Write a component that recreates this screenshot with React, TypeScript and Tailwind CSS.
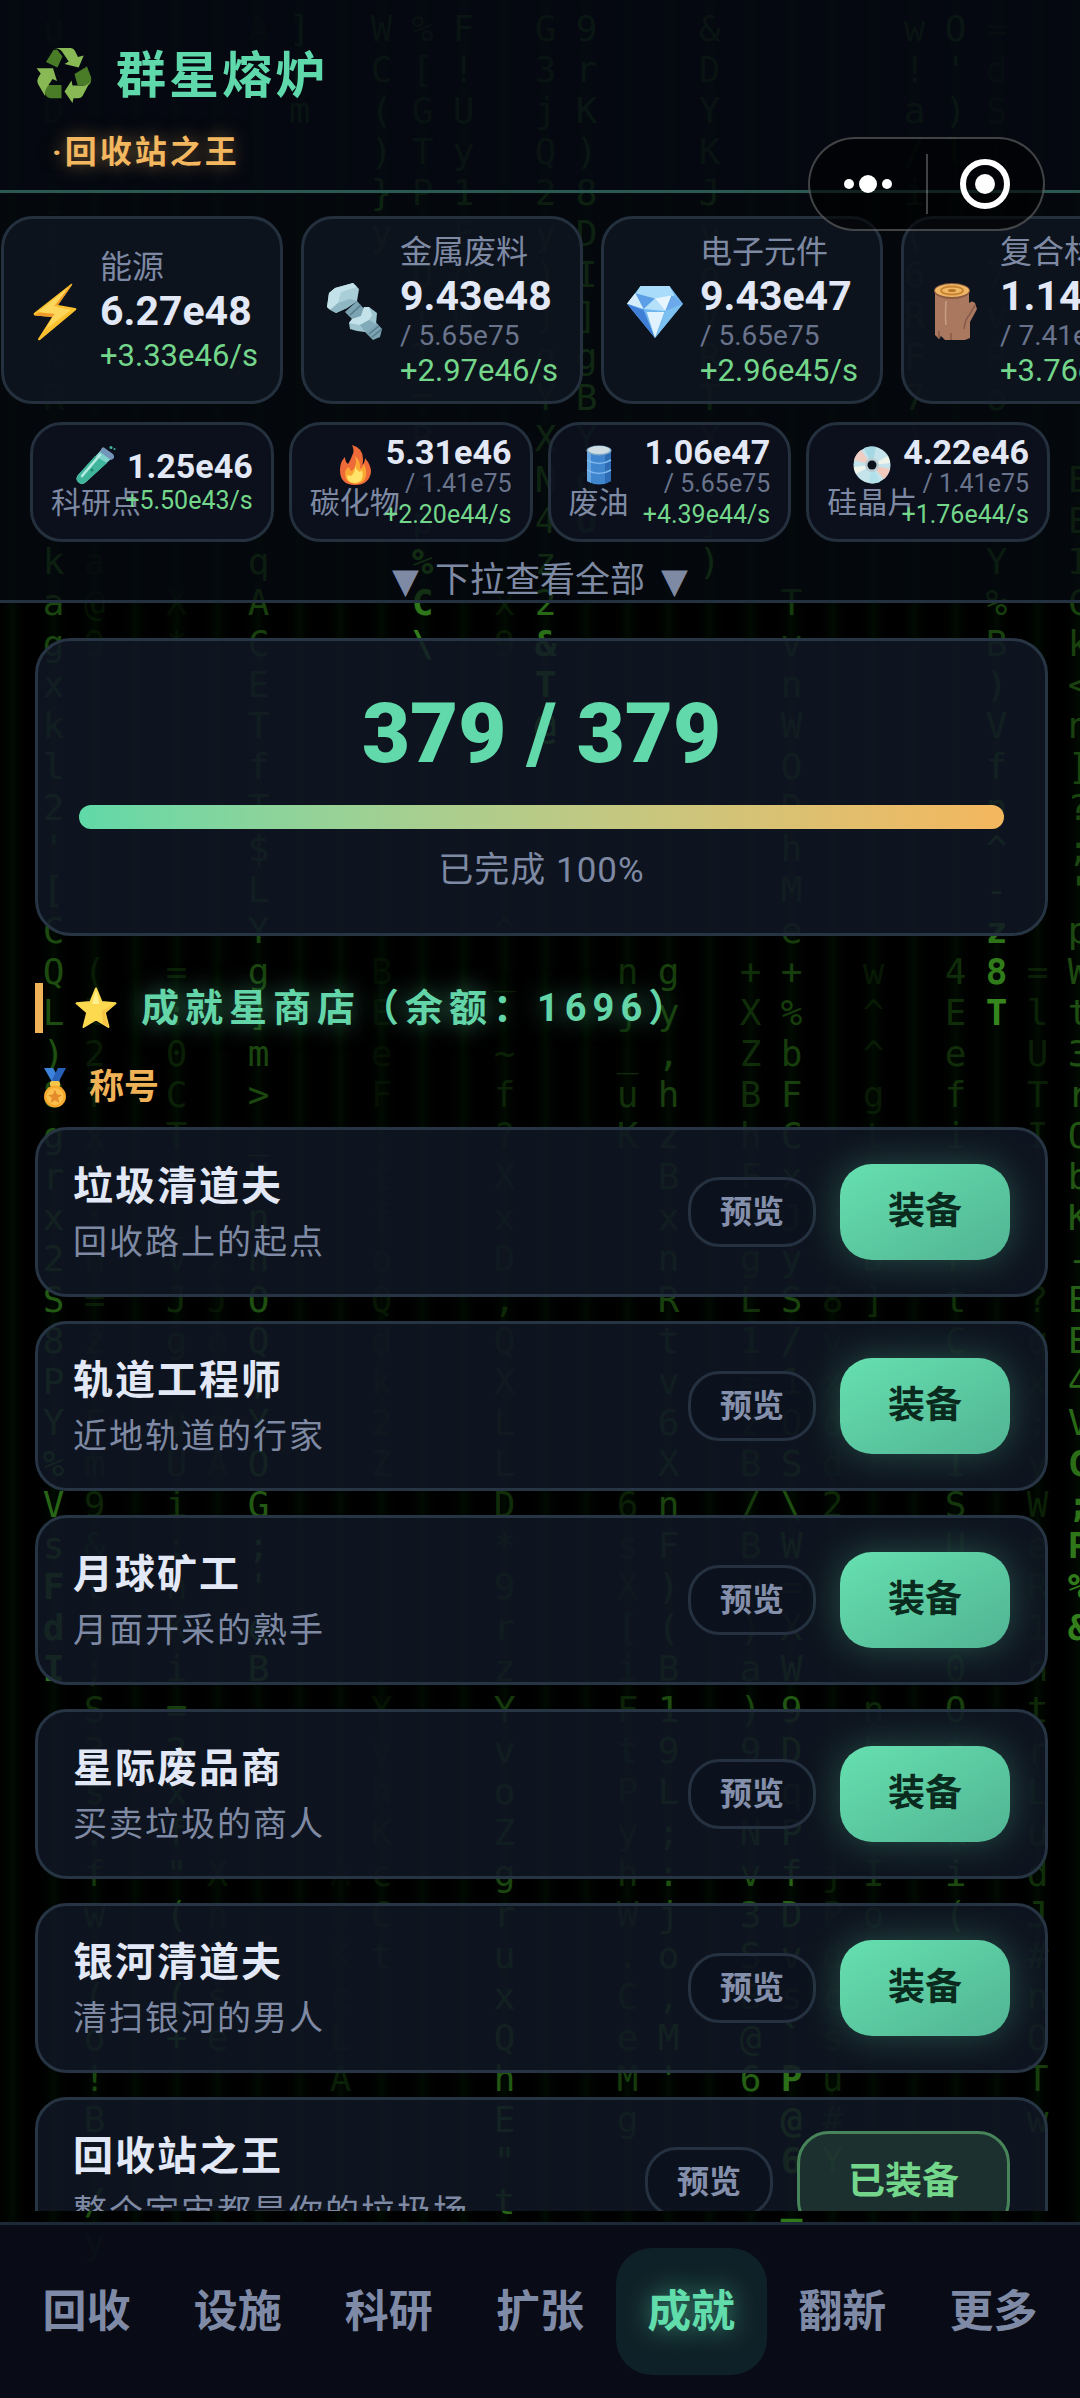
import { useState } from 'react';

type IconProps = { className?: string };

function RecycleIcon({ className }: IconProps) {
  return (
    <svg viewBox="0 0 56 56" className={className} aria-hidden="true">
      <path d="M10 14 17.500 2 21 1.500 26.500 8.500 21.500 19.500Z" fill="#4a7c28" />
      <path d="M38.500 26 51 18.500 55 29Q56 34 53 37H41.500Z" fill="#4a7c28" />
      <path d="M10 37H25.500V50.300H15Q10 50 8.700 45Z" fill="#4a7c28" />
      <path d="M18.500 0H35Q38 .5 39 3L42 9 47.700 7.500 42.700 19.500 28.500 16 32.700 13.500 26 3.500Q23 0 18.500 0Z" fill="#88b954" />
      <path d="M54.500 33 46.500 48Q45 50.300 42 50.300H37.500L36.500 55 28.500 43.500 35.500 32.500 36.500 37.500H47Q52 37.500 54.500 33Z" fill="#88b954" />
      <path d="M.5 20.300H17L21 33 16.500 31 10.500 40Q8 44 9 48L2 36Q.5 33 2 30L4.700 25.500Z" fill="#88b954" />
    </svg>
  );
}

function EnergyIcon({ className }: IconProps) {
  return (
    <svg viewBox="0 0 56 58" className={className} aria-hidden="true">
      <path d="M44 1 7 30Q6 32 8 32.500L25 34 11 56Q11 58 13 57L49 27Q50 25 48 25L31 22 45 2Q46 0 44 1Z" fill="#fbc02d" />
      <path d="M42 4 11 29 27 31 19 46 44 27 29 24Z" fill="#fdd75c" />
      <path d="M8 32.500 25 34 28 31 12 29.500ZM31 22 45 2 42 4 27 23.500Z" fill="#f19a2c" />
    </svg>
  );
}

function BoltIcon({ className }: IconProps) {
  return (
    <svg viewBox="0 0 56 58" className={className} aria-hidden="true">
      <path d="M18 29 30 18 55 46 53 54 46 57Z" fill="#7ba3b2" />
      <path d="M23 32 34 22M42 51 52 43M45 54 55 46" stroke="#557b8a" strokeWidth="1.500" />
      <path d="M0 24 2 10 8 5 26 0 32 6 30 18 20 25 9 30Z" fill="#a9ced8" />
      <path d="M2 10 8 5 26 0 30 4 14 9 11 20 3 27 0 24Z" fill="#c3e1e8" />
      <path d="M11 20 23 16 30 18 20 25 9 30 3 27Z" fill="#8fb7c3" />
      <path d="M22 40 25 36 34 33 37 24 42 24 50 30 49 41 38 49 30 48 23 46Z" fill="#9dc4cf" />
      <path d="M22 40 25 36 34 33 37 24 42 24 45 32 42 37 33 42Z" fill="#c4e2e9" />
      <path d="M33 42 42 37 49 41 38 49Z" fill="#82abb9" />
    </svg>
  );
}

function GemIcon({ className }: IconProps) {
  return (
    <svg viewBox="0 0 56 56" className={className} aria-hidden="true">
      <path d="M14 3H42L55 20 28 53 1 20Z" fill="#6fb6ee" />
      <path d="M14 3H42L47 12 28 16 9 11Z" fill="#a9dcfa" />
      <path d="M1 20 9 10 14 21Z" fill="#e8f6fe" />
      <path d="M9 10 28 15 17 26Z" fill="#5d9fe6" />
      <path d="M9 10 17 25 1 20Z" fill="#d4edfc" />
      <path d="M28 15 38 27 17 25Z" fill="#b5e0fa" />
      <path d="M28 15 44 12 38 27Z" fill="#e7f5fe" />
      <path d="M44 12 55 20 38 27Z" fill="#6ca9ea" />
      <path d="M1 20 17 26 28 53Z" fill="#3f7fd8" />
      <path d="M20 28 37 28 28 53Z" fill="#dff2fd" />
      <path d="M38 27 55 20 28 53Z" fill="#7cc0f0" />
    </svg>
  );
}

function WoodIcon({ className }: IconProps) {
  return (
    <svg viewBox="0 0 56 58" className={className} aria-hidden="true">
      <path d="M8 8V52L12 56 14 53 18 57H38L43 55V39L50 26 48 20Q45 17 42 20V8Z" fill="#a9785f" />
      <path d="M37 46Q38 36 43 31L48 22" fill="none" stroke="#85594a" strokeWidth="1.500" />
      <path d="M19 18Q18 34 19 42" fill="none" stroke="#c8a085" strokeWidth="1.500" />
      <path d="M12 56V48M24 57V50" stroke="#85594a" strokeWidth="1.500" />
      <ellipse cx="25" cy="8" rx="18" ry="8" fill="#8a5b40" />
      <ellipse cx="25" cy="7.500" rx="17" ry="6.500" fill="#f0b866" />
      <ellipse cx="25" cy="7.500" rx="11" ry="4" fill="none" stroke="#c68434" strokeWidth="2" />
      <ellipse cx="25" cy="7.500" rx="4" ry="1.500" fill="#b97428" />
    </svg>
  );
}

function TubeIcon({ className }: IconProps) {
  return (
    <svg viewBox="0 0 40 40" className={className} aria-hidden="true">
      <path d="M26 4 36 13 10 37Q6 41 2 37-1 34 2 30Z" fill="#7fd3cd" />
      <path d="M19 11 31 18 10 37Q6 41 2 37-1 34 2 30Z" fill="#41b59c" />
      <path d="M24 10 6 31" stroke="#b8ece2" strokeWidth="2.500" strokeLinecap="round" />
      <path d="M25 5Q26 0 30 4L37 9Q40 13 35 15L24 7Z" fill="#7396b8" />
      <circle cx="35" cy="2.500" r="1.500" fill="#43b8a0" />
      <circle cx="38.500" cy="4" r="1" fill="#43b8a0" />
      <circle cx="16" cy="25" r="1.500" fill="#1f8571" />
    </svg>
  );
}

function FireIcon({ className }: IconProps) {
  return (
    <svg viewBox="0 0 40 40" className={className} aria-hidden="true">
      <path d="M17 0Q28 3 28 14 28 19 27 20 30 18 30 13 36 20 36 27 34 40 20 40 5 40 5 25 5 17 10 12 10 17 13 19 15 16 17 11 20 6 17 0Z" fill="#ee6a38" />
      <path d="M20 11Q26 16 25 24 28 23 29 19 32 25 31 31 29 39 20 39 10 38 10 29 10 24 14 22 15 26 17 26 23 20 20 11Z" fill="#fba733" />
      <path d="M20 20Q21 25 25 27L27 25Q30 37 20 38 12 38 12 30L16 31Q21 27 20 20Z" fill="#ffe36b" />
    </svg>
  );
}

function BarrelIcon({ className }: IconProps) {
  return (
    <svg viewBox="0 0 40 40" className={className} aria-hidden="true">
      <path d="M8 5V36Q20 43 32 36V5Z" fill="#3f86cf" />
      <path d="M26 7V39L32 36V5Z" fill="#2d6bb4" />
      <path d="M8 5V36L12 38V8Z" fill="#65a6e3" />
      <path d="M8 15Q20 22 32 15M8 25Q20 32 32 25" fill="none" stroke="#7db7ec" strokeWidth="1.500" />
      <ellipse cx="20" cy="5.500" rx="12.500" ry="5" fill="#7fa9c9" />
      <ellipse cx="20" cy="5" rx="11" ry="4" fill="#cfdde2" />
    </svg>
  );
}

function DiscIcon({ className }: IconProps) {
  return (
    <svg viewBox="0 0 40 40" className={className} aria-hidden="true">
      <circle cx="20" cy="20" r="18.500" fill="#c5e3ea" />
      <path d="M20 20 12 3A18.500 18.500 0 0 1 24 2Z" fill="#a3d8e4" />
      <path d="M20 20 2 15A18.500 18.500 0 0 1 9 5Z" fill="#f0cdc3" />
      <path d="M20 20 38 24A18.500 18.500 0 0 1 32 34Z" fill="#f2cabd" />
      <path d="M20 20 28 37A18.500 18.500 0 0 1 17 38Z" fill="#b0e0e9" />
      <path d="M20 20 36 11A18.500 18.500 0 0 1 38 18ZM20 20 4 29A18.500 18.500 0 0 1 2 22Z" fill="#f1f4ea" />
      <circle cx="20" cy="20" r="7" fill="#b9ccd2" />
      <circle cx="20" cy="20" r="4.500" fill="#0b111b" />
    </svg>
  );
}

function StarIcon({ className }: IconProps) {
  return (
    <svg viewBox="0 0 42 42" className={className} aria-hidden="true">
      <path
        d="M21 1.500 26.500 15 40.500 16.300 29.800 25.500 33.500 40 21 32.500 8.500 40 12.200 25.500 1.500 16.300 15.500 15Z"
        fill="#fdd94f"
        stroke="#fdd94f"
        strokeWidth="2"
        strokeLinejoin="round"
      />
      <path d="M40.500 16.300 29.800 25.500 33.500 40 28 36.700 27 24Z" fill="#f8c445" />
      <path d="M21 3 24.500 17 17 17Z" fill="#fff08f" />
    </svg>
  );
}

function MedalIcon({ className }: IconProps) {
  return (
    <svg viewBox="0 0 40 40" className={className} aria-hidden="true">
      <path d="M9 0H18L25 12 20 17 17 14Z" fill="#3c83dc" />
      <path d="M31 0H23L17 12 23 15Z" fill="#2860b8" />
      <rect x="15" y="13" width="10" height="6" rx="2" fill="#f6c64b" />
      <circle cx="20" cy="28.500" r="11" fill="#f6a92d" />
      <circle cx="20" cy="28.500" r="8.500" fill="#fbc04c" />
      <path d="M20 21.500 22 26.500 27 27 23 30 24.500 35 20 32.300 15.500 35 17 30 13 27 18 26.500Z" fill="#e58b2b" />
    </svg>
  );
}

// col, first row, glyphs, opacity of the first and last glyph
const RAIN: [number, number, string, number, number][] = [
  [1, 0, 'uXD', 0.15, 0.15],
  [1, 4, '_i1jkR', 0.1, 0.2],
  [1, 13, "kagxkl2'[CQL)8grx2S8PY%VsFdI", 0.5, 0.85],
  [2, 13, 'a@9', 0.1, 0.1],
  [2, 23, '(l2fx7:n=z=Fm9&tX;S3s:fw!(o!Bn/y', 0.15, 0.6],
  [4, 14, 'X*', 0.08, 0.08],
  [4, 23, '=:0CTk_vJgJuUi:nKi=2xf"(+(+', 0.2, 0.7],
  [5, 30, 'xJoEqA', 0.1, 0.15],
  [5, 45, 'XnFse', 0.15, 0.35],
  [6, 0, 'AX', 0.1, 0.1],
  [6, 13, "qACETfT$LYg]m>_HnnOQ;YOG;'eB", 0.45, 0.75],
  [7, 0, ']rm', 0.45, 0.45],
  [8, 45, 'AnKcLA', 0.05, 0.2],
  [9, 0, 'WC()}y', 0.4, 0.7],
  [9, 23, 'BEeF:tfoQdk2Z', 0.08, 0.2],
  [9, 41, 'YvhKcCt', 0.1, 0.25],
  [10, 0, "%[GTP_U[T=BAp%C\\", 0.35, 0.95],
  [11, 0, 'F!Uy1FoW2', 0.45, 0.3],
  [12, 14, 'x9', 0.15, 0.15],
  [12, 22, "^_`~f?XxD,QXLLD*9rzYvoZgruxQhE\"t", 0.2, 0.75],
  [13, 0, 'G3jQ2y)]gYXN4z2&T@', 0.4, 0.95],
  [14, 0, '9rK)8DI]gBYqO', 0.5, 0.9],
  [15, 23, 'nj_uK', 0.3, 0.35],
  [15, 36, '6sX[iFtPyhW.CeMg', 0.2, 0.45],
  [16, 23, "gy,hzBxnRtv6XnF)(B19L;:jo,M'", 0.45, 0.65],
  [17, 0, '&DYKJyoVRTX(])', 0.4, 0.65],
  [18, 23, '+XZBhFJgL1=zB/Bw)a)9ZNv3SB@6', 0.3, 0.7],
  [19, 14, 'TvnWODhMe+%bFCxJyS/1OS\\W=XW9DqPfDvs`P@6_', 0.4, 0.9],
  [20, 31, '8vxdd2', 0.15, 0.25],
  [20, 45, 'jPdcsu#Y', 0.15, 0.3],
  [21, 23, 'w^^gt)qD]', 0.15, 0.25],
  [21, 41, 'nhHuIosT', 0.25, 0.45],
  [22, 0, 'w!a/i(6RF7)', 0.4, 0.45],
  [23, 0, "O')l", 0.5, 0.45],
  [23, 23, '4Eefi:trtCLiISUvX0Op8ki(PV', 0.3, 0.6],
  [24, 0, '=dS', 0.2, 0.2],
  [24, 6, '7vRo1c_Y%B)Vfn^-z8T', 0.3, 1],
  [25, 23, '=lUTI', 0.2, 0.2],
  [25, 31, '?qx:yWeR1ntrLudJ#nOTw', 0.2, 0.45],
  [26, 11, "EEICk<n]?;'pWt3rObK-EE4VC;P%&", 0.45, 0.95],
];

function MatrixRain() {
  return (
    <div aria-hidden="true" className="pointer-events-none absolute inset-0 flex overflow-hidden bg-black">
      <div className="-ml-2 flex shrink-0">
        {Array.from({ length: 27 }, (_, col) => {
          const cells = Array(56).fill(null).map(() => ({ ch: '', opacity: 0 }));
          RAIN.filter((seg) => seg[0] === col).forEach(([, row, text, from, to]) => {
            [...text].forEach((ch, i) => {
              const t = text.length > 1 ? i / (text.length - 1) : 1;
              cells[row + i] = { ch, opacity: from + (to - from) * t * t };
            });
          });
          return (
            <div
              key={col}
              className="w-[41px] bg-linear-to-r from-black via-[#010b02] to-black pt-2 text-center font-['DejaVu_Sans_Mono',monospace] text-[36px] leading-[41px] text-[#35861d]"
            >
              {cells.map((cell, i) => (
                <div key={i} className={cell.opacity > 0.8 ? 'h-[41px] font-bold' : 'h-[41px]'} style={{ opacity: cell.opacity }}>
                  {cell.ch}
                </div>
              ))}
            </div>
          );
        })}
      </div>
    </div>
  );
}

const mainResources = [
  { name: '能源', value: '6.27e48', cap: '', rate: '+3.33e46/s', Icon: EnergyIcon },
  { name: '金属废料', value: '9.43e48', cap: '/ 5.65e75', rate: '+2.97e46/s', Icon: BoltIcon },
  { name: '电子元件', value: '9.43e47', cap: '/ 5.65e75', rate: '+2.96e45/s', Icon: GemIcon },
  { name: '复合材料', value: '1.14e48', cap: '/ 7.41e75', rate: '+3.76e46/s', Icon: WoodIcon },
];

const subResources = [
  { name: '科研点', value: '1.25e46', cap: '', rate: '+5.50e43/s', Icon: TubeIcon },
  { name: '碳化物', value: '5.31e46', cap: '/ 1.41e75', rate: '+2.20e44/s', Icon: FireIcon },
  { name: '废油', value: '1.06e47', cap: '/ 5.65e75', rate: '+4.39e44/s', Icon: BarrelIcon },
  { name: '硅晶片', value: '4.22e46', cap: '/ 1.41e75', rate: '+1.76e44/s', Icon: DiscIcon },
];

const titles = [
  { name: '垃圾清道夫', desc: '回收路上的起点' },
  { name: '轨道工程师', desc: '近地轨道的行家' },
  { name: '月球矿工', desc: '月面开采的熟手' },
  { name: '星际废品商', desc: '买卖垃圾的商人' },
  { name: '银河清道夫', desc: '清扫银河的男人' },
  { name: '回收站之王', desc: '整个宇宙都是你的垃圾场' },
];

const tabs = ['回收', '设施', '科研', '扩张', '成就', '翻新', '更多'];

export default function App() {
  const [equipped, setEquipped] = useState('回收站之王');
  const [tab, setTab] = useState('成就');

  return (
    <div className="relative flex h-screen flex-col overflow-hidden bg-black font-['Roboto','Noto_Sans_CJK_SC',sans-serif] text-[#e2e8f5]">
      <MatrixRain />

      <header className="relative border-b-3 border-[#2a5852] bg-[#060a14]/80 px-9 pt-10 pb-4">
        <h1 className="flex h-[72px] items-center gap-6 text-[50px] font-bold tracking-[3px] text-[#5fd9ac]">
          <RecycleIcon className="size-[56px]" />
          <span>群星熔炉</span>
        </h1>
        <p className="mt-4 ml-4 flex h-[46px] text-[32px] leading-[48px] font-bold tracking-[3px] text-[#f3b760] [text-shadow:0_0_18px_rgba(243,183,96,0.5)]">
          <span>·</span>
          <span>回收站之王</span>
        </p>
      </header>

      {/* mini program capsule, floats above header and resource cards */}
      <div className="absolute top-[137px] right-[35px] z-10 flex h-[94px] w-[237px] items-center rounded-full border-2 border-white/25 bg-black/60">
        <button aria-label="更多操作" className="flex flex-1 items-center justify-center gap-[5px]">
          <span className="size-[10px] rounded-full bg-white" />
          <span className="size-[18px] rounded-full bg-white" />
          <span className="size-[10px] rounded-full bg-white" />
        </button>
        <span className="h-[60px] w-[2px] bg-white/25" />
        <button aria-label="关闭" className="flex flex-1 items-center justify-center">
          <span className="flex size-[50px] items-center justify-center rounded-full border-6 border-white">
            <span className="size-[20px] rounded-full bg-white" />
          </span>
        </button>
      </div>

      <section className="relative border-b-3 border-[#243140] bg-[#060b13]/65 pt-[23px]">
        <div className="flex gap-[18px] overflow-hidden pl-px">
          {mainResources.map(({ name, value, cap, rate, Icon }) => (
            <div key={name} className="flex h-[188px] w-[282px] shrink-0 items-center gap-4 rounded-[32px] border-3 border-[#24303d] bg-[#0f1521]/85 pt-1 pl-[22px] whitespace-nowrap">
              <Icon className="size-[58px] shrink-0" />
              <div>
                <div className="text-[32px] leading-[38px] text-[#7e89a3]">{name}</div>
                <div className="text-[41px] leading-[50px] font-bold">{value}</div>
                {cap && <div className="text-[28px] leading-[30px] text-[#69748c]">{cap}</div>}
                <div className="text-[31px] leading-[40px] text-[#74d68b]">{rate}</div>
              </div>
            </div>
          ))}
        </div>

        <div className="mt-[18px] grid grid-cols-4 gap-[15px] px-[30px]">
          {subResources.map(({ name, value, cap, rate, Icon }) => (
            <div key={name} className="flex h-[120px] items-center rounded-[32px] border-3 border-[#24303d] bg-[#0d1220]/85 px-[18px] pt-[2px] whitespace-nowrap">
              <div className="flex shrink-0 flex-col items-center">
                <Icon className="size-[40px]" />
                <span className="text-[30px] leading-[36px] text-[#7e89a3]">{name}</span>
              </div>
              <div className="flex min-w-0 flex-1 flex-col items-end">
                <span className="text-[34px] leading-[36px] font-bold">{value}</span>
                {cap && <span className="text-[25px] leading-[28px] text-[#69748c]">{cap}</span>}
                <span className="text-[25px] leading-[34px] text-[#74d68b]">{rate}</span>
              </div>
            </div>
          ))}
        </div>

        <button className="flex h-[58px] w-full items-center justify-center gap-4 pt-5 text-[35px] leading-[38px] text-[#7e89a3]">
          <span className="font-['DejaVu_Sans',sans-serif]">▼</span>
          <span>下拉查看全部</span>
          <span className="font-['DejaVu_Sans',sans-serif]">▼</span>
        </button>
      </section>

      <main className="relative mb-[11px] min-h-0 flex-1 overflow-hidden pt-[35px] pr-[32px] pl-[35px]">
        <section className="flex h-[298px] flex-col items-center rounded-[36px] border-3 border-[#263443] bg-[#101824]/85 px-[41px] pt-[46px]">
          <div className="text-[83px] leading-[94px] font-black text-[#61d9aa]">379 / 379</div>
          <div
            role="progressbar"
            aria-label="成就进度"
            aria-valuenow={379}
            aria-valuemax={379}
            className="mt-6 h-6 w-full rounded-full bg-linear-to-r from-[#5fd9a8] to-[#f4b75e]"
          />
          <div className="mt-4 text-[35px] leading-[52px] tracking-[1px] text-[#7e89a3]">已完成 100%</div>
        </section>

        <h2 className="mt-[47px] flex h-[50px] items-center gap-6 border-l-8 border-[#f0b256] pl-8 text-[38px] font-bold tracking-[6px] text-[#63d5a8] [text-shadow:0_0_24px_rgba(95,217,168,0.5)]">
          <StarIcon className="size-[42px]" />
          <span>成就星商店（余额：1696）</span>
        </h2>

        <h3 className="mt-8 flex h-[46px] items-center gap-[14px] text-[35px] font-bold text-[#f0b256]">
          <MedalIcon className="size-[40px]" />
          <span>称号</span>
        </h3>

        <ul className="mt-4 flex flex-col gap-6">
          {titles.map(({ name, desc }) => (
            <li key={name} className="flex h-[170px] shrink-0 items-center rounded-[32px] border-3 border-[#263443] bg-[#101824]/85 px-[35px]">
              <div className="flex-1">
                <div className="text-[40px] leading-[60px] font-bold tracking-[2px]">{name}</div>
                <div className="text-[34px] leading-[50px] tracking-[2px] text-[#7e89a3]">{desc}</div>
              </div>
              <button className="h-[70px] rounded-[32px] border-3 border-[#253140] bg-[#0b111c]/60 px-[29px] text-[32px] font-bold text-[#8490ab]">
                预览
              </button>
              {equipped === name ? (
                <button className="ml-6 h-[102px] rounded-[32px] border-3 border-[#47845a] bg-[#74d68b]/15 px-12 text-[37px] font-bold text-[#74d68b]">
                  已装备
                </button>
              ) : (
                <button
                  onClick={() => setEquipped(name)}
                  className="ml-6 h-[96px] rounded-[32px] bg-linear-to-br from-[#66e0b0] to-[#51b493] px-12 text-[37px] font-bold text-[#0a2a1e] shadow-[0_0_36px_rgba(95,217,168,0.3)]"
                >
                  装备
                </button>
              )}
            </li>
          ))}
        </ul>
      </main>

      <nav className="relative grid h-[176px] grid-cols-7 border-t-3 border-[#1d2937] bg-[#090d18]/95 px-[11px] py-[23px]">
        {tabs.map((name) => (
          <button
            key={name}
            onClick={() => setTab(name)}
            className={
              tab === name
                ? 'rounded-[36px] bg-[#0f2128] text-[44px] font-bold text-[#61dcab] [text-shadow:0_0_24px_rgba(95,217,168,0.6)]'
                : 'rounded-[36px] text-[44px] font-bold text-[#7f8ba6]'
            }
          >
            {name}
          </button>
        ))}
      </nav>
    </div>
  );
}
